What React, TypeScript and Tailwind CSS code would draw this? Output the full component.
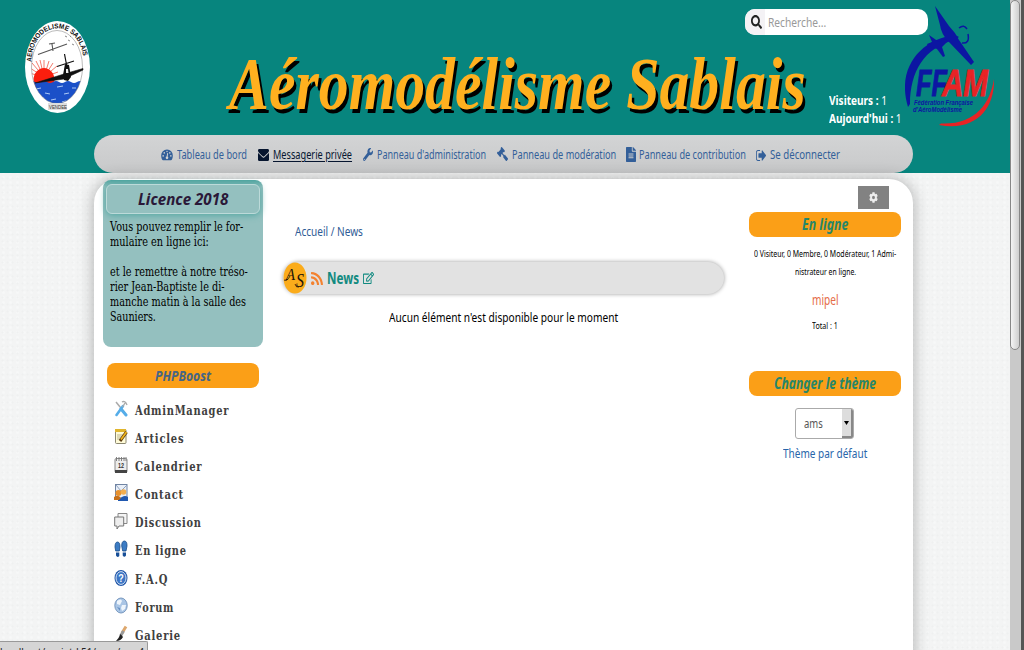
import { useLayoutEffect, useRef, useState } from "react";
import type { ReactNode } from "react";
import { FaCog, FaFileAlt, FaGavel, FaRegEdit, FaRss, FaSearch, FaWrench } from "react-icons/fa";

/* Condenses or widens a single line of text to the width of its box. */
function Fit({ className = "", children }: { className?: string; children: ReactNode }) {
  const outer = useRef<HTMLSpanElement>(null);
  const inner = useRef<HTMLSpanElement>(null);
  const [scale, setScale] = useState(1);
  useLayoutEffect(() => {
    if (outer.current && inner.current && inner.current.offsetWidth) {
      setScale(outer.current.offsetWidth / inner.current.offsetWidth);
    }
  }, []);
  return (
    <span ref={outer} className={`block shrink-0 whitespace-nowrap ${className}`}>
      <span ref={inner} className="inline-block origin-left align-top" style={{ transform: `scaleX(${scale})` }}>
        {children}
      </span>
    </span>
  );
}

function ClubLogo() {
  return (
    <svg className="mt-5 ml-6 h-[94px] w-[67px] shrink-0" viewBox="0 0 67 94">
      <defs>
        <path id="arc" d="M7.500 42C9 -3 58 -3 60 44" />
        <clipPath id="oval"><ellipse cx="33" cy="47" rx="25.5" ry="36.5" /></clipPath>
      </defs>
      <ellipse cx="33.5" cy="47" rx="32.5" ry="46" fill="#fff" />
      <g clipPath="url(#oval)">
        <rect width="67" height="94" fill="#fff" />
        <g stroke="#f47b6c" strokeWidth="1">
          <path d="M20 57L6 48M20 57L8 43M20 57L12 41M20 57L16 40M20 57V40M20 57L25 41M20 57L29 43M20 57L33 46M20 57L34 52M20 57L5 53" />
        </g>
        <ellipse cx="20" cy="60" rx="10.5" ry="12" fill="#fa1e0e" />
        <path d="M5 62q3-2 6 0t6 0 6 0 6 0 6 0 6 0 6 0 6 0 8 0v30H5z" fill="#1b50c8" />
        <path d="M12 69l5-1M21 73l5 1M33 67l6-1M40 74l5-1M48 68l4 0M27 80l5-1M38 82l4-1M17 77l3 1" stroke="#a9c6f5" strokeWidth="1.2" />
      </g>
      <ellipse cx="33" cy="47" rx="25.5" ry="36.5" fill="none" stroke="#777" strokeWidth=".5" />
      <path d="M14 34.500L43 24M25 24l6-1M28 24l1 7" stroke="#555" strokeWidth="1.1" />
      <path d="M11 63L40 54 59 48.500v1.500L46 56l-6 3z" fill="#111" stroke="#111" strokeWidth=".6" />
      <path d="M33 46.500L50 41M40.500 34l3 16" stroke="#111" strokeWidth="1.2" />
      <path d="M41 44l4 1 2 12-3 4-4-1-1-5z" fill="#111" />
      <path d="M42 49h2l.5 4h-2.500z" fill="#eee" />
      <path d="M41 16l2 1M44 20l2 1M48 24l2 1M46 16l1 1" stroke="#888" />
      <text fontSize="7" fontWeight="700" fontFamily="Liberation Sans, sans-serif" fill="#111">
        <textPath href="#arc" textLength="88" lengthAdjust="spacingAndGlyphs">AEROMODELISME SABLAIS</textPath>
      </text>
      <rect x="24" y="83" width="19" height="7" fill="#ddd" />
      <text x="25" y="89" fontSize="6" textLength="18" lengthAdjust="spacingAndGlyphs" fontFamily="Liberation Sans, sans-serif" fill="#333">VENDEE</text>
    </svg>
  );
}

function FfamLogo() {
  return (
    <svg className="mt-1.5 -ml-6 h-[121px] w-[92px] shrink-0" viewBox="0 0 92 121">
      <g fill="#0c16a2">
        <path d="M3 101C-9 62 16 33 50 29L54 31 49 34C19 42 5 66 5 98z" />
        <path d="M30 0L44 20Q50 26 54 34L69 56 66 59 44 36Q36 28 35 19z" />
        <path d="M24 29l10 7 6-3 3 2-6 6 3 9-2 1-6-8-9-3-1-2 5-2z" />
      </g>
      <path d="M54 22q5-4 8 1M57 37q8 1 6-9" fill="none" stroke="#0c16a2" strokeWidth="1.5" />
      <path d="M89 73C85 98 70 119 36 117.500L34 119C72 126 90 101 89 73z" fill="#e82325" />
      <g fontFamily="Liberation Sans, sans-serif" fontWeight="700" fontStyle="italic">
        <text x="11" y="89.500" fontSize="36" textLength="31" lengthAdjust="spacingAndGlyphs" fill="#0c16a2" stroke="#0c16a2" strokeWidth=".9">FF</text>
        <text x="37" y="89.500" fontSize="36" textLength="46" lengthAdjust="spacingAndGlyphs" fill="#e82325" stroke="#e82325" strokeWidth=".9">AM</text>
        <text x="9" y="98.500" fontSize="6.800" textLength="59" lengthAdjust="spacingAndGlyphs" fill="#0c16a2">Fédération Française</text>
        <text x="8" y="106" fontSize="6.800" textLength="49" lengthAdjust="spacingAndGlyphs" fill="#0c16a2">d'AéroModélisme</text>
      </g>
    </svg>
  );
}

const GaugeIcon = () => (
  <svg viewBox="0 0 14 13" preserveAspectRatio="none" className="mr-1 h-[12px] w-[12px] shrink-0">
    <path d="M7 .5a6.700 6.700 0 0 1 6.800 6.900q0 2.300-1.200 4.300-.3.500-.9.500H2.300q-.6 0-.9-.5Q.2 9.700.2 7.400A6.700 6.700 0 0 1 7 .5z" fill="#335f99" />
    <path d="M7.800 4.500L7 9" stroke="#d1d2d3" strokeWidth="1.100" />
    <g fill="#d1d2d3"><circle cx="7" cy="9.500" r="1.500" /><circle cx="2.500" cy="7.500" r=".9" /><circle cx="3.800" cy="4.200" r=".9" /><circle cx="7" cy="2.700" r=".8" /><circle cx="10.300" cy="4.200" r=".9" /><circle cx="11.500" cy="7.500" r=".9" /></g>
  </svg>
);

const EnvelopeIcon = () => (
  <svg viewBox="0 256 1792 1408" preserveAspectRatio="none" className="mr-1 h-[12px] w-[11px] shrink-0" fill="currentColor">
    <path d="M1792 710v794q0 66-47 113t-113 47h-1472q-66 0-113-47t-47-113v-794q44 49 101 87 362 246 497 345 57 42 92.5 65.5t94.5 48 110 24.5h2q51 0 110-24.5t94.5-48 92.5-65.5q170-123 498-345 57-39 100-87zm0-294q0 79-49 151t-122 123q-376 261-468 325-10 7-42.5 31t-54 38.5-52 32.5-57.5 27-50 9h-2q-23 0-50-9t-57.5-27-52-32.5-54-38.5-42.5-31q-91-64-262-182.5t-205-142.5q-62-42-117-115.5t-55-136.5q0-78 41.5-130t118.5-52h1472q65 0 112.5 47t47.5 113z" />
  </svg>
);

const SignOutIcon = () => (
  <svg viewBox="0 256 1568 1280" preserveAspectRatio="none" className="mr-1 h-[11px] w-[10px] shrink-0" fill="currentColor">
    <path d="M640 1440q0 4 1 20t.5 26.5-3 23.5-10 19.5-20.5 6.5h-320q-119 0-203.5-84.5t-84.5-203.5v-704q0-119 84.5-203.5t203.5-84.5h320q13 0 22.5 9.5t9.5 22.5q0 4 1 20t.5 26.5-3 23.5-10 19.5-20.5 6.5h-320q-66 0-113 47t-47 113v704q0 66 47 113t113 47h312l11.5 1 11.5 3 8 5.5 7 9 2 13.5zm928-544q0 26-19 45l-544 544q-19 19-45 19t-45-19-19-45v-288h-448q-26 0-45-19t-19-45v-384q0-26 19-45t45-19h448v-288q0-26 19-45t45-19 45 19l544 544q19 19 19 45z" />
  </svg>
);

const menu: { label: string; width: string; art: ReactNode }[] = [
  {
    label: "AdminManager", width: "w-[94px]",
    art: (<><path d="M2 2l9 11" stroke="#aaa" strokeWidth="1.500" /><path d="M9 6L2.500 15" stroke="#55ade9" strokeWidth="2.600" strokeLinecap="round" /><path d="M7 9l5 6" stroke="#55ade9" strokeWidth="3" strokeLinecap="round" /><path d="M8 2q3-2 5 3M11 3L8.500 7" stroke="#aaa" fill="none" strokeWidth="1.400" /></>),
  },
  {
    label: "Articles", width: "w-[49px]",
    art: (<><rect x="1.5" y="1.5" width="10.5" height="14" rx="1" fill="#fffbd8" stroke="#8b8770" /><path d="M1 1h11v3H1z" fill="#e0b52e" /><path d="M3 7h6M3 9h5M3 11h4" stroke="#bbb590" /><path d="M12.500 4L6 13" stroke="#5b3a10" strokeWidth="3" /><path d="M12.500 4L7 11.500" stroke="#f0b51d" strokeWidth="1.800" /></>),
  },
  {
    label: "Calendrier", width: "w-[67px]",
    art: (<><rect x="1" y="2.500" width="12" height="14" rx="1.300" fill="#ededed" stroke="#888" /><path d="M1 14h12v3H1z" fill="#444" /><path d="M2.500 1v4M5 1v4M7.500 1v4M10 1v4M12 1v4" stroke="#777" strokeWidth=".9" /><text x="4" y="11.500" fontSize="7" fontWeight="700" textLength="6" lengthAdjust="spacingAndGlyphs" fontFamily="Liberation Sans, sans-serif" fill="#333">12</text></>),
  },
  {
    label: "Contact", width: "w-[49px]",
    art: (<><rect x="1.500" y=".5" width="11.500" height="15" fill="#e9eff8" stroke="#7084a3" /><path d="M2 1l5 6 6-6" stroke="#8fa2bd" fill="none" /><circle cx="4.500" cy="9" r="3" fill="#e8922e" /><circle cx="9.500" cy="8" r="2.800" fill="#f3ae4f" /><path d="M4 17v-2q2-1 4-2 3-2 6 0v4z" fill="#2058b0" /><path d="M0 16v-3q4-3 7 1l-2 2z" fill="#c6701a" /></>),
  },
  {
    label: "Discussion", width: "w-[67px]",
    art: (<><path d="M4 1.500h9v10H4z" fill="#f5f5f5" stroke="#888" /><path d="M.7 5h9v9H5l-2 3v-3H.7z" fill="#eee" stroke="#777" /></>),
  },
  {
    label: "En ligne", width: "w-[52px]",
    art: (<><path d="M1 7q0-5 2.500-5T6 7l-.7 4H1.700zM7.700 6q0-5 2.700-5T13 6l-1 5H8.700z" fill="#3c7cc4" stroke="#184c8c" strokeWidth=".8" /><path d="M2 12.500h3.300V16q-2 2-3.300-.5zM8.700 12.500H12v3q-1.700 2.500-3.300 0z" fill="#184f98" /></>),
  },
  {
    label: "F.A.Q", width: "w-[33px]",
    art: (<><ellipse cx="7" cy="9" rx="6.500" ry="8" fill="#2258a8" /><ellipse cx="7" cy="9" rx="5" ry="6.400" fill="#3c76c5" stroke="#e5eefa" strokeWidth=".9" /><text x="4.300" y="13" fontSize="11" fontWeight="700" textLength="5.500" lengthAdjust="spacingAndGlyphs" fontFamily="Liberation Sans, sans-serif" fill="#fff">?</text></>),
  },
  {
    label: "Forum", width: "w-[39px]",
    art: (<><ellipse cx="7" cy="8.500" rx="6.200" ry="7.500" fill="#a9c5e5" stroke="#7898bf" /><path d="M3 4q4-3 5 0L6 8 3 7zM8 8l4 0-1 4-3 2-1-3z" fill="#eef5fc" /><path d="M3 10l3 1v3z" fill="#6690c4" /></>),
  },
  {
    label: "Galerie", width: "w-[46px]",
    art: (<><path d="M12 1.500L8 8" stroke="#dda76d" strokeWidth="3" /><path d="M9.500 6l-3 5" stroke="#999" strokeWidth="3" /><path d="M6.500 9L9 12q-2 4-7 4 3-3 4.500-7z" fill="#222" /></>),
  },
];

function Banner({ children }: { children: ReactNode }) {
  return <h2 className="flex h-[25px] w-[152px] justify-center rounded-lg bg-[#fb9f17] font-bold italic">{children}</h2>;
}

export default function App() {
  return (
    <div className="relative flex h-[650px] w-[1024px] overflow-hidden bg-[#f3f4f4] font-['Noto_Sans','Open_Sans',sans-serif] text-black">
      <main className="h-[650px] w-[1010px] shrink-0 overflow-hidden bg-[radial-gradient(circle,#eff0f0_0.5px,transparent_1.5px),radial-gradient(circle,#f7f8f8_0.8px,transparent_1.6px)] bg-[length:5px_7px,7px_5px]">
        <header className="h-[173px] bg-[#07857e]">
          <div className="flex h-[135px]">
            <ClubLogo />
            <div className="ml-[138px] w-[700px] shrink-0">
              <div className="mt-[9px] ml-[516px] flex h-[26px] w-[183px] items-center overflow-hidden rounded-[10px] bg-white">
                <div className="flex h-full w-5 items-center justify-end bg-[#f4f2f5] pr-[3px]">
                  <FaSearch preserveAspectRatio="none" className="h-[14px] w-[11px] text-[#222]" />
                </div>
                <Fit className="ml-[3px] w-[58px] text-[13px] leading-[26px] text-[#999]">Recherche...</Fit>
              </div>
              <div className="flex">
                <h1 className="mt-[10px] w-[577px] shrink-0 font-['Liberation_Serif',serif] text-[73px] leading-[80px] font-bold text-[#ffb01f] italic [text-shadow:3px_4px_0_#000]">
                  <Fit className="w-[577px]">Aéromodélisme Sablais</Fit>
                </h1>
                <div className="mt-[57px] ml-[23px] text-[12px] leading-[17.500px] text-white">
                  <Fit className="w-[58px]"><b>Visiteurs :</b> 1</Fit>
                  <Fit className="w-[73px]"><b>Aujourd'hui :</b> 1</Fit>
                </div>
              </div>
            </div>
            <FfamLogo />
          </div>
          <nav className="ml-[94px] flex h-[38px] w-[819px] items-center rounded-[19px] bg-linear-to-b from-[#d3d4d5] to-[#c8c9ca] pt-[2px] pl-[67px] text-[12px] leading-[18px] text-[#335f99]">
            <GaugeIcon />
            <Fit className="mr-[11px] w-[70px]">Tableau de bord</Fit>
            <span className="flex items-center text-[#06152f]">
              <EnvelopeIcon />
              <Fit className="mr-[11px] w-[79px]"><span className="underline underline-offset-2">Messagerie privée</span></Fit>
            </span>
            <FaWrench preserveAspectRatio="none" className="mr-1 mb-[2px] h-[13px] w-[10px] shrink-0" />
            <Fit className="mr-[11px] w-[109px]">Panneau d'administration</Fit>
            <FaGavel preserveAspectRatio="none" className="mr-1 mb-[2px] h-[14px] w-[11px] shrink-0 -scale-x-100" />
            <Fit className="mr-[10px] w-[104px]">Panneau de modération</Fit>
            <FaFileAlt preserveAspectRatio="none" className="mr-[3px] mb-[2px] h-[15px] w-[10px] shrink-0" />
            <Fit className="mr-[10px] w-[107px]">Panneau de contribution</Fit>
            <SignOutIcon />
            <Fit className="w-[70px]">Se déconnecter</Fit>
          </nav>
        </header>

        <section className="mt-[6px] ml-[94px] flex h-[500px] w-[819px] rounded-t-[24px] bg-white shadow-[0_0_16px_rgba(0,0,0,0.3)]">
          <aside className="ml-[9px] w-[160px] shrink-0 pt-px">
            <div className="h-[167px] rounded-lg bg-[#94c0bf] bg-linear-to-b from-[#4ea5a0] to-[#94c0bf] to-[7px] px-[3px] pt-1">
              <h2 className="flex h-[30px] justify-center rounded-md border border-[#bcdad9] bg-[#94c0bf] text-[16.500px] leading-[27px] font-bold text-[#2a1838] italic shadow-[0_1px_7px_#4ea5a0]">
                <Fit className="w-[90px]">Licence 2018</Fit>
              </h2>
              <div className="mt-[5px] ml-1 font-['DejaVu_Serif',serif] text-[12.500px] leading-[15px]">
                <Fit className="w-[133px]">Vous pouvez remplir le for-</Fit>
                <Fit className="w-[99px]">mulaire en ligne ici:</Fit>
                <Fit className="mt-[15px] w-[138px]">et le remettre à notre tréso-</Fit>
                <Fit className="w-[115px]">rier Jean-Baptiste le di-</Fit>
                <Fit className="w-[136px]">manche matin à la salle des</Fit>
                <Fit className="w-[46px]">Sauniers.</Fit>
              </div>
            </div>
            <div className="mt-4 ml-1 text-[15px] leading-[24px] text-[#466585]">
              <Banner><Fit className="w-[56px]">PHPBoost</Fit></Banner>
            </div>
            <ul className="mt-[9px] ml-[11px] font-['DejaVu_Serif',serif] text-[13px] leading-[28px] font-bold text-[#404040]">
              {menu.map((item) => (
                <li key={item.label} className="flex h-[28.100px]">
                  <svg viewBox="0 0 14 18" className="mt-[3px] mr-[7px] h-[18px] w-[14px] shrink-0" fill="none">{item.art}</svg>
                  <Fit className={`tracking-[1px] ${item.width}`}>{item.label}</Fit>
                </li>
              ))}
            </ul>
          </aside>

          <div className="ml-[20px] w-[441px] shrink-0">
            <Fit className="mt-[43px] ml-[12px] w-[68px] text-[13px] leading-[18px] text-[#2f5c96]">Accueil / News</Fit>
            <div className="mt-[22px] flex h-[32px] items-center rounded-[16px] bg-[#e2e2e2] shadow-[0_0_4px_rgba(0,0,0,0.4)]">
              <svg viewBox="0 0 24 32" className="h-[32px] w-[24px]">
                <ellipse cx="12" cy="16" rx="11.500" ry="15.500" fill="#fbac1b" />
                <g fontFamily="Liberation Serif, serif" fontStyle="italic" fill="#21140a">
                  <text x="3" y="18" fontSize="17" textLength="9" lengthAdjust="spacingAndGlyphs">A</text>
                  <text x="13" y="25" fontSize="19" textLength="8" lengthAdjust="spacingAndGlyphs">S</text>
                </g>
                <path d="M1 18q3 2 6-4M12 22q1 4 4 3" fill="none" stroke="#21140a" strokeWidth=".8" />
              </svg>
              <FaRss preserveAspectRatio="none" className="mr-[4px] ml-[4px] h-[15px] w-[12px] text-[#f38230]" />
              <Fit className="mr-[4px] w-[32px] text-[16px] leading-[28px] font-bold text-[#118a80]">News</Fit>
              <FaRegEdit preserveAspectRatio="none" className="h-[12px] w-[11px] text-[#118a80]" />
            </div>
            <Fit className="mt-[14px] ml-[106px] w-[229px] text-[13px] leading-[18px]">Aucun élément n'est disponible pour le moment</Fit>
          </div>

          <aside className="ml-[25px] w-[152px] shrink-0">
            <div className="mt-[7px] ml-[109px] flex h-[23px] w-[31px] items-center justify-center bg-[#828282]">
              <FaCog preserveAspectRatio="none" className="h-[11px] w-[9px] text-[#eee]" />
            </div>
            <div className="mt-[3px] text-[15.500px] leading-[24px] text-[#27866a]">
              <Banner><Fit className="w-[46px]">En ligne</Fit></Banner>
            </div>
            <div className="mt-[8px] flex flex-col items-center text-[9px] leading-[18px]">
              <Fit className="w-[142px]">0 Visiteur, 0 Membre, 0 Modérateur, 1 Admi-</Fit>
              <Fit className="w-[61px]">nistrateur en ligne.</Fit>
              <Fit className="mt-[10px] w-[27px] text-[13.500px] text-[#e56c48]">mipel</Fit>
              <Fit className="mt-[8px] w-[26px]">Total : 1</Fit>
            </div>
            <div className="mt-[36px] text-[15.500px] leading-[24px] text-[#27866a]">
              <Banner><Fit className="w-[102px]">Changer le thème</Fit></Banner>
            </div>
            <div className="mt-[12px] ml-[46px] flex h-[31px] w-[59px] items-center overflow-hidden rounded-[3px] border border-[#aaa] pl-2">
              <Fit className="w-[19px] text-[13px] text-[#555]">ams</Fit>
              <span className="ml-auto flex h-full w-[11px] items-center justify-center border-r-2 border-b-2 border-[#888] bg-[#ddd]">
                <svg viewBox="0 0 5 4" className="h-1 w-[5px]"><path d="M0 0h5L2.500 4z" /></svg>
              </span>
            </div>
            <Fit className="mt-[5px] ml-[34px] w-[84px] text-[13px] leading-[18px] text-[#2765aa]">Thème par défaut</Fit>
          </aside>
        </section>
      </main>

      <div className="flex h-full w-[14px] shrink-0 bg-[#c9c9c9]">
        <div className="h-[350px] w-[10px] rounded-[5px] border border-[#888] bg-linear-to-r from-[#f5f5f5] to-[#cfcfcf]" />
        <div className="ml-auto h-full w-[3px] bg-[#555]" />
      </div>

      <div className="absolute bottom-0 left-0 h-[9px] w-[148px] overflow-hidden rounded-tr-[2px] border-t border-r border-[#999] bg-[#d5d5d5] text-[11px] leading-[20px] text-[#222]">
        <Fit className="w-[144px]">localhost/projet-L51/user/pm-4</Fit>
      </div>
    </div>
  );
}
